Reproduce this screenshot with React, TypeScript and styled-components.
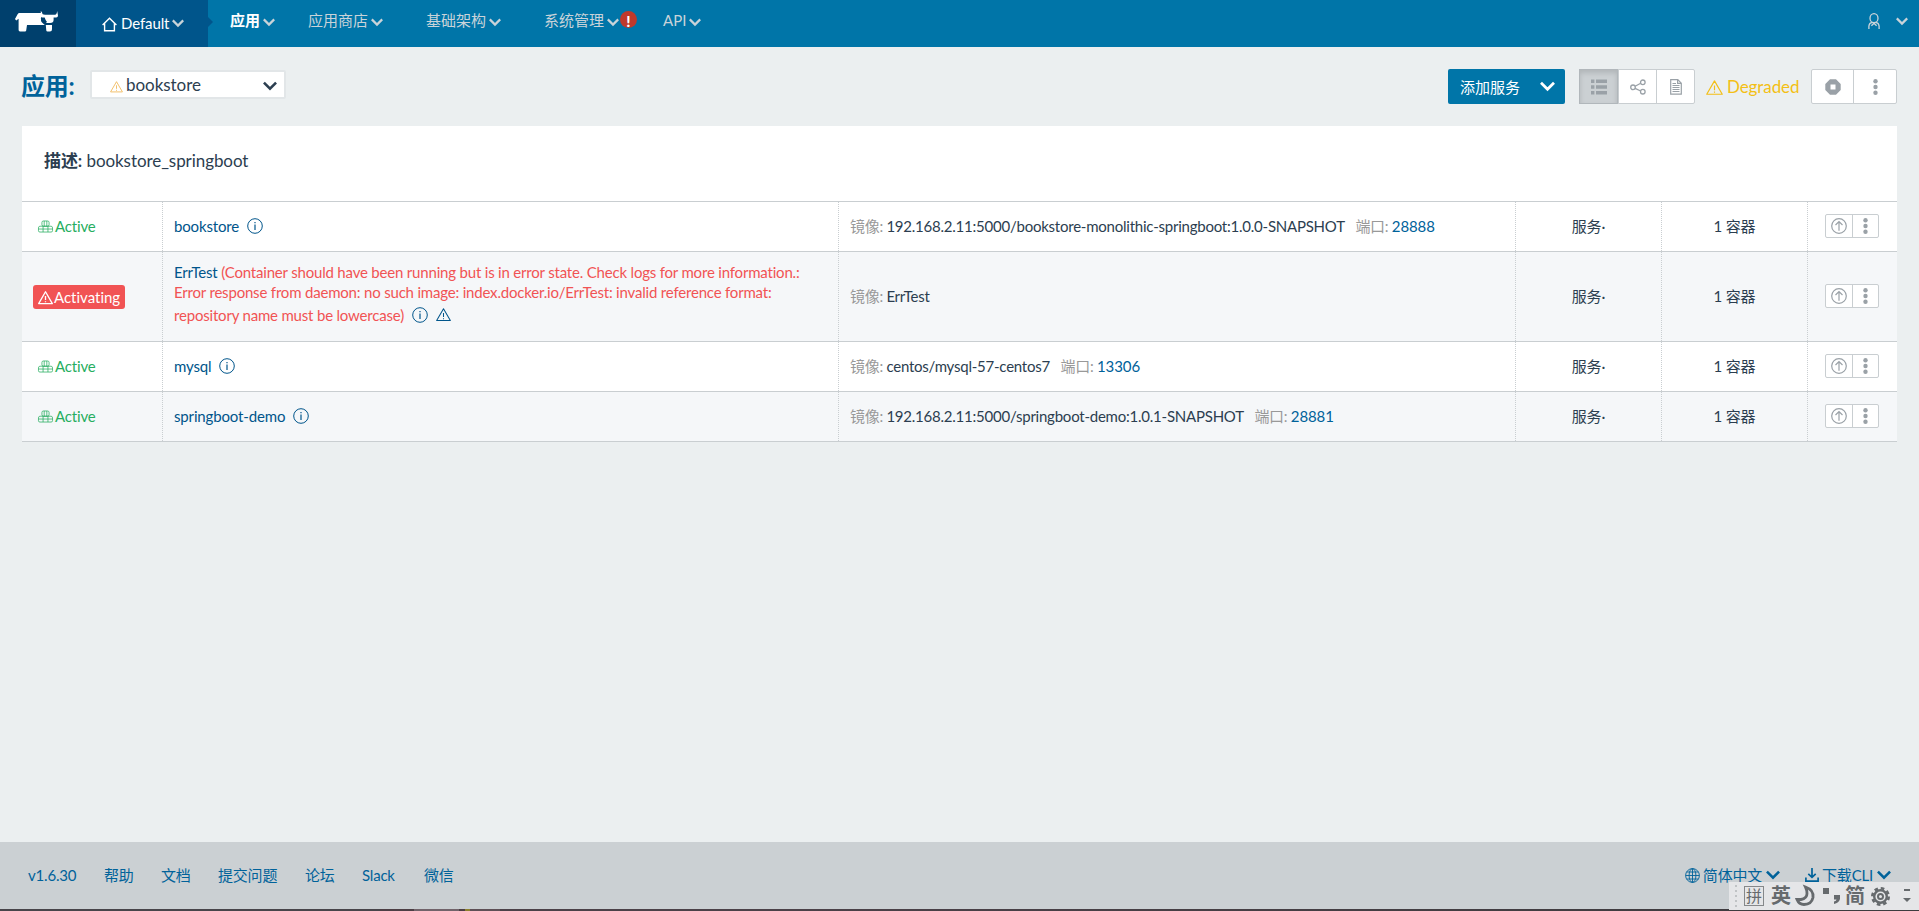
import React from 'react';
import styled, { createGlobalStyle, css } from 'styled-components';

const blue = '#0075a8';
const link = '#00558b';
const line = '#c9ced1';
const grey = '#9aa1a7';

const GlobalStyle = createGlobalStyle`
  * { box-sizing: border-box; }
  body {
    margin: 0;
    background: #ebeff0;
    color: #2c3e50;
    font: 400 15px/20px Lato, "Noto Sans CJK SC", sans-serif;
    font-variant-ligatures: none;
    overflow: hidden;
  }
`;

const Page = styled.div`
  height: 911px;
  display: flex;
  flex-direction: column;
`;

/* ---------- icons ---------- */

const Svg = styled.svg`
  display: block;
  flex: none;
  overflow: visible;
  fill: none;
  stroke: currentColor;
`;

const Chevron = ({ w = 12, s = 2.2 }: { w?: number; s?: number }) => (
  <Svg width={w} height={w * 0.7} viewBox="0 0 12 8.4" strokeWidth={s}>
    <path d="M.8 1.4 6 6.6 11.2 1.4" />
  </Svg>
);

const Warning = ({ w = 15, s = 1.1 }: { w?: number; s?: number }) => (
  <Svg width={w} height={w * 0.88} viewBox="0 0 16 14" strokeWidth={s} strokeLinejoin="round">
    <path d="M8 .8 15.3 13.4H.7ZM8 5.2v4.4M8 10.8v1.2" />
  </Svg>
);

const Info = () => (
  <Svg width="16" height="16" viewBox="0 0 16 16" strokeWidth="1">
    <circle cx="8" cy="8" r="7.3" />
    <path d="M8 6.6V12M8 4v1.3" strokeWidth="1.2" />
  </Svg>
);

const Boxes = () => (
  <Svg width="15" height="13" viewBox="0 0 16 13" strokeWidth=".8">
    <rect x="4.2" y=".6" width="7.6" height="5.6" rx="1.6" />
    <path d="M6.6 .6v5.6M9.4 .6v5.6M4.2 6.2H2Q.5 6.4.5 8v3q0 1.400 1.500 1.400H14q1.500 0 1.500-1.400V8q0-1.600-1.500-1.800H4.200M5.400 6.200v6.200M10.600 6.200v6.200M.5 9.200h15" />
  </Svg>
);

const Home = () => (
  <Svg width="15" height="15" viewBox="0 0 15 15" strokeWidth="1.4">
    <path d="M.6 8 7.500 1.200 14.400 8M2.600 6.500v7.300h9.800V6.500" />
  </Svg>
);

const User = () => (
  <Svg width="12" height="17" viewBox="0 0 12 17" strokeWidth="1.3">
    <ellipse cx="6" cy="5.200" rx="4" ry="4.500" />
    <path d="M.9 16v-3Q1.200 9.800 4.200 9.300M11.100 16v-3Q10.800 9.800 7.800 9.300M3.400 12.800 6 10.200l2.600 2.600" />
  </Svg>
);

const Kebab = ({ h = 16 }: { h?: number }) => (
  <Svg width="5" height={h} viewBox={`0 0 5 ${h}`}>
    <g fill="currentColor" stroke="none">
      <circle cx="2.500" cy={2.2} r="2.200" />
      <circle cx="2.500" cy={h / 2} r="2.200" />
      <circle cx="2.500" cy={h - 2.2} r="2.200" />
    </g>
  </Svg>
);

const Upgrade = () => (
  <Svg width="16" height="16" viewBox="0 0 16 16" strokeWidth="1.200">
    <circle cx="8" cy="8" r="7.300" />
    <path d="M8 12.800V3.800M4.500 7 8 3.600 11.500 7" />
  </Svg>
);

const ListIcon = () => (
  <Svg width="16" height="16" viewBox="0 0 16 16" strokeWidth="3.400">
    <path d="M0 2.200h3.400M5 2.200h11M0 8h3.400M5 8h11M0 13.800h3.400M5 13.800h11" />
  </Svg>
);

const Share = () => (
  <Svg width="16" height="16" viewBox="0 0 16 16" strokeWidth="1.300">
    <circle cx="3" cy="8.300" r="2.300" />
    <circle cx="12.800" cy="3.300" r="2.300" />
    <circle cx="12.800" cy="12.700" r="2.300" />
    <path d="M5.100 7.200 10.700 4.200M5.100 9.400 10.700 12" />
  </Svg>
);

const Doc = () => (
  <Svg width="12" height="16" viewBox="0 0 12 16" strokeWidth="1.200">
    <path d="M.7.700H7.800L11.300 4.200V15.200H.7ZM7.600.700V4.400H11.300M2.500 6.500h7M2.500 8.500h7M2.500 10.500h7M2.500 12.500h7M2.500 4.500h3.500" />
  </Svg>
);

const Stop = () => (
  <Svg width="16" height="16" viewBox="0 0 16 16">
    <path
      d="M5 .3h6L15.700 5v6L11 15.700H5L.3 11V5ZM5.500 5.500v5h5v-5Z"
      fill="currentColor"
      fillRule="evenodd"
      stroke="none"
    />
  </Svg>
);

const Globe = () => (
  <Svg width="15" height="15" viewBox="0 0 15 15" strokeWidth=".9">
    <circle cx="7.500" cy="7.500" r="6.900" />
    <ellipse cx="7.500" cy="7.500" rx="3.400" ry="6.900" />
    <path d="M7.500.6v13.800M.6 7.500h13.800M1.600 4h11.800M1.600 11h11.800" />
  </Svg>
);

const Download = () => (
  <Svg width="14" height="14" viewBox="0 0 14 14" strokeWidth="1.700">
    <path d="M7 0v9M3.300 5.800 7 9.400l3.700-3.600M.9 9.600v3.500h12.200V9.600" />
  </Svg>
);

const Cow = () => (
  <Svg width="44" height="22" viewBox="0 0 44 22">
    <g fill="#fff" stroke="none">
      <path d="M0 8 2.600 3.200Q3.200 2 4.600 2H26v7.500q0 1.200 1 2l2.500 2.200h7.500v4.500q0 2.300-2 2.300h-2.500q-1 0-1.200-1L30.800 14H12l-.8 5.500q-.2 1-1.200 1H5q-1.400 0-1.400-1.400V7.800L1.200 9.600Z" />
      <path d="M27 1.200 25.800 0v5Q26 6.500 27.200 6.500h2.500q1.300 4 2.300 4.200l-1 1.300h4q3.600 0 3.600-3V6.500h2.600q1.800 0 1.800-2L42.200 0q-.4 3.700-2.200 3.700H30Q27 3.700 27 1.200Z" />
    </g>
    <path d="M26.300 7.500 30 13.500H37" stroke="#00406d" strokeWidth=".9" />
  </Svg>
);

/* ---------- top bar ---------- */

const TopBar = styled.header`
  display: flex;
  flex: none;
  height: 47px;
  background: ${blue};
  color: #c9d3d9;
`;

const LogoBox = styled.div`
  width: 76px;
  padding: 11px 0 0 15px;
  background: #00406d;
`;

const Environment = styled.div`
  position: relative;
  display: flex;
  align-items: center;
  width: 132px;
  padding: 0 0 2px 26px;
  background: ${link};
  color: #fff;
  gap: 4px;
  letter-spacing: -0.1px;

  &::after {
    content: '';
    position: absolute;
    left: 100%;
    top: 17px;
    border: 5px solid transparent;
    border-right-width: 0;
    border-left-color: ${link};
  }

  ${Svg}:first-child { margin-top: 3px; }

  ${Svg}:last-child {
    color: #c9d3d9;
    margin: 2px 0 0 -1px;
  }
`;

const Nav = styled.nav`
  display: flex;
  flex: 1;
  padding-left: 22px;
`;

const NavItem = styled.a<{ $width: number; $active?: boolean }>`
  display: flex;
  align-items: center;
  width: ${(p) => p.$width}px;
  height: 40px;
  gap: 3px;
  ${(p) => p.$active && css`color: #fff; font-weight: 700;`}

  ${Svg} {
    margin-top: 4px;
    color: #c9d3d9;
  }
`;

const Alert = styled.span`
  display: grid;
  place-items: center;
  width: 17px;
  height: 17px;
  margin: -1px 0 0 -2px;
  border-radius: 50%;
  background: #c0392b;
  color: #fff;
  font-size: 15px;
  font-weight: 900;
`;

const Account = styled.div`
  display: flex;
  align-items: center;
  height: 42px;
  gap: 16px;
  padding-right: 11px;
`;

/* ---------- stack header ---------- */

const StackHeader = styled.div`
  display: flex;
  align-items: center;
  flex: none;
  height: 79px;
  padding: 0 22px;
`;

const Title = styled.h1`
  width: 68px;
  margin: -2px 0 0;
  color: #00629a;
  font-size: 24px;
  font-weight: 700;
  line-height: 30px;
  letter-spacing: -0.3px;
  text-indent: -1px;
  white-space: nowrap;
`;

const Picker = styled.div`
  display: flex;
  align-items: center;
  width: 196px;
  height: 29px;
  margin-top: -4px;
  padding: 0 7px 0 18px;
  gap: 3px;
  border: 2px solid #e2e6e8;
  border-radius: 2px;
  background: #fff;
  font-size: 17px;
  letter-spacing: -0.05px;

  ${Svg}:first-child { color: #f0b95c; margin-top: 4px; }
  ${Svg}:last-child { margin: 3px 0 0 auto; }
`;

const Tools = styled.div`
  display: flex;
  align-items: center;
  margin-left: auto;
  margin-top: 0;
`;

const AddButton = styled.button`
  display: flex;
  align-items: center;
  justify-content: space-between;
  width: 117px;
  height: 35px;
  margin-right: 14px;
  padding: 0 10px 0 12px;
  border: 0;
  border-radius: 2px;
  background: ${blue};
  color: #fff;
  font: inherit;
`;

const Group = styled.div<{ $small?: boolean }>`
  display: flex;
  height: ${(p) => (p.$small ? 24 : 35)}px;
  border: 1px solid ${line};
  border-radius: 2px;
  background: #fff;
  color: ${grey};
`;

const Tool = styled.button<{ $width: number; $on?: boolean }>`
  display: grid;
  place-items: center;
  width: ${(p) => p.$width}px;
  padding: 0;
  border: 0;
  background: none;
  color: inherit;

  & + & { border-left: 1px solid ${line}; }

  ${(p) =>
    p.$on &&
    css`
      margin: -1px 0 -1px -1px;
      background: #cbd0d3;
      border: 1px solid #b1b7bb;
      box-shadow: inset 0 3px 5px rgba(0, 0, 0, 0.125);
    `}
`;

const Health = styled.div`
  display: flex;
  align-items: center;
  width: 116px;
  padding-left: 11px;
  gap: 4px;
  color: #f3bf15;
  font-size: 17px;
  letter-spacing: -0.1px;

  ${Svg} { margin-top: 1px; }
`;

/* ---------- services ---------- */

const Panel = styled.main`
  flex: none;
  margin: 0 22px;
  background: #fff;
`;

const Description = styled.div`
  height: 75px;
  padding: 25px 22px 0;
  font-size: 17px;
  letter-spacing: -0.07px;
`;

const Row = styled.div<{ $alt?: boolean }>`
  display: grid;
  grid-template-columns: 141px 676px 677px 146px 146px 1fr;
  min-height: 50px;
  border-top: 1px solid ${line};
  background: ${(p) => (p.$alt ? '#f5f7f9' : '#fff')};

  &:last-child { border-bottom: 1px solid ${line}; min-height: 51px; }
`;

const Cell = styled.div<{ $center?: boolean }>`
  display: flex;
  align-items: center;
  justify-content: ${(p) => (p.$center ? 'center' : 'flex-start')};
  padding: 0 11px 2px;
  border-right: 1px dotted ${line};
  white-space: pre;
  letter-spacing: -0.15px;

  &:last-child { border-right: 0; padding: 0 0 1px 17px; }
`;

const State = styled.span<{ $error?: boolean }>`
  display: flex;
  align-items: center;
  height: 25px;
  gap: 2px;
  padding: 0 5px;
  color: #27ae60;
  letter-spacing: -0.15px;
  ${(p) =>
    p.$error &&
    css`
      height: 24px;
      margin-top: 2px;
      gap: 1px;
      border-radius: 3px;
      background: #f15354;
      color: #fff;
      letter-spacing: 0;
    `}

  ${Svg} { margin-top: 2px; }
`;

const Name = styled.div`
  display: flex;
  align-items: center;
  color: ${link};
  letter-spacing: -0.15px;
  gap: 8px;

  ${Svg} { margin-top: 1px; }
`;

const ErrorBlock = styled.div`
  padding: 10px 0 12px;
  color: #f15354;
  letter-spacing: -0.19px;

  b { font-weight: 400; color: ${link}; }
`;

const ErrorLast = styled.div`
  display: flex;
  align-items: center;
  height: 24px;
  margin-top: 1px;
  gap: 8px;

  ${Svg} { color: ${link}; }
`;

const Label = styled.span`
  color: #999;
  letter-spacing: -0.3px;
`;

const ImageText = styled.span`
  letter-spacing: -0.23px;
`;

const Port = styled.span`
  color: #00629a;
  letter-spacing: -0.1px;
`;

/* ---------- footer ---------- */

const Footer = styled.footer`
  display: flex;
  flex: none;
  height: 67px;
  margin-top: auto;
  padding: 0 28px 1px;
  align-items: center;
  gap: 28px;
  background: #cbd0d3;
  color: #00629a;
`;

const FootLink = styled.a<{ $width?: number }>`
  display: flex;
  align-items: center;
  white-space: nowrap;
  letter-spacing: -0.2px;
  ${(p) => p.$width && css`width: ${p.$width}px;`}
`;

const FootRight = styled.div`
  display: flex;
  margin-left: auto;
  gap: 25px;
`;

const FootMenu = styled(FootLink)`
  gap: 3px;

  ${Svg}:last-child { margin-left: 1px; }
`;

const BottomEdge = styled.div`
  flex: none;
  height: 2px;
  background: linear-gradient(
    90deg,
    #48454a 0 380px, #4d3f45 380px 414px, #71636a 414px 459px, #4d3f45 459px 465px,
    #8e812e 465px 470px, #5e5056 470px 500px, #4b4148 500px 800px, #3d3b3e 1919px
  );
`;

const InputBar = styled.div`
  position: absolute;
  right: 0;
  bottom: 1px;
  display: flex;
  align-items: center;
  width: 190px;
  height: 28px;
  padding-left: 6px;
  background: #e5e6e8;
  color: #666a6d;
  font-size: 20px;
  font-weight: 700;
`;

const Grip = styled.i`
  width: 2px;
  height: 22px;
  margin-right: 7px;
  background: repeating-linear-gradient(#c0c3c5 0 2px, transparent 2px 5px);
`;

const BoxedGlyph = styled.span`
  display: grid;
  place-items: center;
  width: 20px;
  height: 20px;
  margin-right: 7px;
  border: 1px solid #85888a;
  font-size: 16px;
  font-weight: 400;
  line-height: 16px;
`;

const Glyph = styled.span<{ $gap: number }>`
  line-height: 26px;
  margin: -2px ${(p) => p.$gap}px 0 0;
`;

const BarSvg = styled(Svg)<{ $gap: number }>`
  margin-right: ${(p) => p.$gap}px;
  fill: currentColor;
  stroke: none;
`;

type Service = { name: string; image: string; port?: string; failed?: boolean };

const services: Service[] = [
  { name: 'bookstore', image: '192.168.2.11:5000/bookstore-monolithic-springboot:1.0.0-SNAPSHOT', port: '28888' },
  { name: 'ErrTest', image: 'ErrTest', failed: true },
  { name: 'mysql', image: 'centos/mysql-57-centos7', port: '13306' },
  { name: 'springboot-demo', image: '192.168.2.11:5000/springboot-demo:1.0.1-SNAPSHOT', port: '28881' },
];

const ServiceRow = ({ service, alt }: { service: Service; alt: boolean }) => (
  <Row $alt={alt}>
    <Cell>
      {service.failed ? (
        <State $error><Warning w={15} s={1.4} />Activating</State>
      ) : (
        <State><Boxes />Active</State>
      )}
    </Cell>
    <Cell>
      {service.failed ? (
        <ErrorBlock>
          <div><b>{service.name}</b> (Container should have been running but is in error state. Check logs for more information.:</div>
          <div>Error response from daemon: no such image: index.docker.io/ErrTest: invalid reference format:</div>
          <ErrorLast>repository name must be lowercase)<Info /><Warning /></ErrorLast>
        </ErrorBlock>
      ) : (
        <Name>{service.name}<Info /></Name>
      )}
    </Cell>
    <Cell>
      <Label>镜像: </Label>
      <ImageText>{service.image}</ImageText>
      {service.port && <><Label>{'   端口: '}</Label><Port>{service.port}</Port></>}
    </Cell>
    <Cell $center>服务·</Cell>
    <Cell $center>1 容器</Cell>
    <Cell>
      <Group $small>
        <Tool $width={26}><Upgrade /></Tool>
        <Tool $width={26}><Kebab /></Tool>
      </Group>
    </Cell>
  </Row>
);

export default function App() {
  return (
    <Page>
      <GlobalStyle />
      <TopBar>
        <LogoBox><Cow /></LogoBox>
        <Environment><Home />Default<Chevron /></Environment>
        <Nav>
          <NavItem $width={78} $active>应用<Chevron /></NavItem>
          <NavItem $width={118}>应用商店<Chevron /></NavItem>
          <NavItem $width={118}>基础架构<Chevron /></NavItem>
          <NavItem $width={119}>系统管理<Chevron /><Alert>!</Alert></NavItem>
          <NavItem $width={60}>API<Chevron /></NavItem>
        </Nav>
        <Account><User /><Chevron /></Account>
      </TopBar>

      <StackHeader>
        <Title>应用:</Title>
        <Picker><Warning w={13} />bookstore<Chevron w={14} /></Picker>
        <Tools>
          <AddButton>添加服务<Chevron w={15} /></AddButton>
          <Group>
            <Tool $width={39} $on><ListIcon /></Tool>
            <Tool $width={38}><Share /></Tool>
            <Tool $width={38}><Doc /></Tool>
          </Group>
          <Health><Warning w={17} />Degraded</Health>
          <Group>
            <Tool $width={41}><Stop /></Tool>
            <Tool $width={43}><Kebab /></Tool>
          </Group>
        </Tools>
      </StackHeader>

      <Panel>
        <Description><strong>描述:</strong> bookstore_springboot</Description>
        {services.map((s, i) => <ServiceRow key={s.name} service={s} alt={i % 2 === 1} />)}
      </Panel>

      <Footer>
        <FootLink $width={48}>v1.6.30</FootLink>
        <FootLink $width={29}>帮助</FootLink>
        <FootLink $width={29}>文档</FootLink>
        <FootLink $width={59}>提交问题</FootLink>
        <FootLink $width={29}>论坛</FootLink>
        <FootLink $width={34}>Slack</FootLink>
        <FootLink $width={30}>微信</FootLink>
        <FootRight>
          <FootMenu><Globe />简体中文<Chevron w={14} /></FootMenu>
          <FootMenu><Download />下载CLI<Chevron w={14} /></FootMenu>
        </FootRight>
      </Footer>
      <BottomEdge />

      <InputBar>
        <Grip />
        <BoxedGlyph>拼</BoxedGlyph>
        <Glyph $gap={6}>英</Glyph>
        <BarSvg $gap={9} width="17" height="18" viewBox="0 0 17 18">
          <path d="M8.500 0Q17 3 16 10.500 14.500 17.500 7 17.500 2 17.500 0 12.500H4Q10 11.500 10 6.500 10 3 8.500 0Z" fill="none" stroke="currentColor" strokeWidth="2.800" />
        </BarSvg>
        <BarSvg $gap={5} width="17" height="16" viewBox="0 0 17 16">
          <path d="M0 0h6v6H0ZM11 7h6v4Q16 15 11 16V13.500Q13.500 13 13.500 11.500H11Z" />
        </BarSvg>
        <Glyph $gap={6}>简</Glyph>
        <BarSvg $gap={13} width="19" height="19" viewBox="0 0 19 19">
          <circle cx="9.500" cy="9.500" r="8.200" fill="none" stroke="currentColor" strokeWidth="2.600" strokeDasharray="3.600 2.840" />
          <circle cx="9.500" cy="9.500" r="6.300" fill="none" stroke="currentColor" strokeWidth="2.400" />
          <circle cx="9.500" cy="9.500" r="2.500" fill="none" stroke="currentColor" strokeWidth="2" />
        </BarSvg>
        <BarSvg $gap={0} width="8" height="14" viewBox="0 0 8 14">
          <path d="M1 0h6v2H1ZM0 9h8L4 13Z" />
        </BarSvg>
      </InputBar>
    </Page>
  );
}
